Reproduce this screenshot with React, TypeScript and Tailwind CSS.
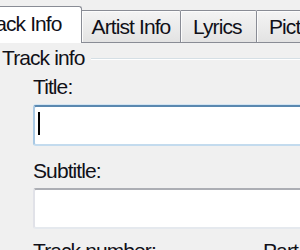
export default function App() {
  return (
    <div className="w-[300px] h-[250px] overflow-hidden bg-[#f0f0f0] text-[21px] leading-[20px] tracking-[-0.9px] text-[#101018] font-['Liberation_Sans',Arial,sans-serif]">
      {/* Tab strip */}
      <div className="flex items-end h-[42px] ml-[-31px] w-[460px]">
        <div className="relative z-10 mb-[-1px] h-[37px] w-[113px] shrink-0 border border-b-0 border-[#898c95] rounded-t-[3px] bg-white pl-[8px] pt-[7px] whitespace-nowrap">
          Track Info
        </div>
        <div className="h-[32px] w-[99px] shrink-0 border-t border-r border-[#898c95] rounded-tr-[2px] bg-linear-to-b from-[#f4f4f4] to-[#e3e3e3] pt-[6px] text-center whitespace-nowrap shadow-[inset_1px_1px_0_#fcfcfc]">
          Artist Info
        </div>
        <div className="h-[32px] w-[76px] shrink-0 border-t border-r border-[#898c95] rounded-tr-[2px] bg-linear-to-b from-[#f4f4f4] to-[#e3e3e3] pt-[6px] pl-[12px] whitespace-nowrap shadow-[inset_1px_1px_0_#fcfcfc]">
          Lyrics
        </div>
        <div className="h-[32px] w-[110px] shrink-0 border-t border-r border-[#898c95] rounded-tr-[2px] bg-linear-to-b from-[#f4f4f4] to-[#e3e3e3] pt-[6px] pl-[12px] whitespace-nowrap shadow-[inset_1px_1px_0_#fcfcfc]">
          Pictures
        </div>
      </div>

      {/* Panel */}
      <div className="border-t border-[#898c95] pt-[5px] mr-[-40px]">
        <div className="flex items-center h-[20px] pl-[2px]">
          <span className="whitespace-nowrap">Track info</span>
          <div className="ml-[7px] flex-1 h-[2px] mt-[1px] border-t border-[#d5dfe5] border-b border-b-white" />
        </div>

        <div className="mt-[9px] pl-[33px] h-[20px]">Title:</div>
        <div className="mt-[8px] ml-[33px] h-[41px] rounded-[3px] border-2 border-t-[#5a88b0] border-x-[#a9c9e4] border-b-[#c3dbee] bg-white shadow-[0_-1px_0_#d3e5f3]">
          <div className="ml-[3px] mt-[5px] w-[2px] h-[23px] bg-black" />
        </div>

        <div className="mt-[15px] pl-[33px] h-[20px]">Subtitle:</div>
        <div className="mt-[7px] ml-[33px] h-[41px] rounded-[3px] border-2 border-t-[#acaeb4] border-x-[#e1e2e8] border-b-[#e5e9ee] bg-white" />

        <div className="mt-[12px] flex h-[20px] whitespace-nowrap">
          <div className="pl-[33px] w-[263px] shrink-0">Track number:</div>
          <div>Part of set:</div>
        </div>
      </div>
    </div>
  );
}
